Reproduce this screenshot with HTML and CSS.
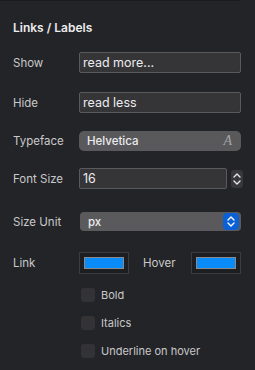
FILE: index.html
```html
<!DOCTYPE html>
<html lang="en">
<head>
    <meta charset="UTF-8">
    <title>Links / Labels</title>
    <link rel="stylesheet" href="styles.css">
</head>
<body>
    <div class="topline"></div>
    <div class="panel">
        <h3>Links / Labels</h3>

        <div class="row row-show">
            <label>Show</label>
            <div class="field">read more...</div>
        </div>

        <div class="row row-hide">
            <label>Hide</label>
            <div class="field">read less</div>
        </div>

        <div class="row row-face">
            <label>Typeface</label>
            <div class="fontbtn">
                <span>Helvetica</span>
                <span class="font-icon">A</span>
            </div>
        </div>

        <div class="row row-size">
            <label>Font Size</label>
            <div class="field field-num">16</div>
            <div class="stepper">
                <svg width="12" height="18" viewBox="0 0 12 18">
                    <path d="M3 7 L6 4 L9 7" fill="none" stroke="#e6e6e6" stroke-width="1.4" stroke-linecap="round" stroke-linejoin="round"/>
                    <path d="M3 11 L6 14 L9 11" fill="none" stroke="#e6e6e6" stroke-width="1.4" stroke-linecap="round" stroke-linejoin="round"/>
                </svg>
            </div>
        </div>

        <div class="row row-unit">
            <label>Size Unit</label>
            <div class="select">
                <span>px</span>
                <span class="select-arrows">
                    <svg width="16" height="17" viewBox="0 0 16 17">
                        <path d="M5 7 L8 4 L11 7" fill="none" stroke="#fff" stroke-width="1.4" stroke-linecap="round" stroke-linejoin="round"/>
                        <path d="M5 10 L8 13 L11 10" fill="none" stroke="#fff" stroke-width="1.4" stroke-linecap="round" stroke-linejoin="round"/>
                    </svg>
                </span>
            </div>
        </div>

        <div class="row row-colors">
            <label>Link</label>
            <div class="well"><div class="swatch"></div></div>
            <span class="hover-label">Hover</span>
            <div class="well"><div class="swatch"></div></div>
        </div>

        <div class="checks">
            <div class="check"><span class="box"></span>Bold</div>
            <div class="check"><span class="box"></span>Italics</div>
            <div class="check"><span class="box"></span>Underline on hover</div>
        </div>
    </div>
</body>
</html>
```

FILE: styles.css
```css
body {
    margin: 0;
    background: #232427;
    font-family: 'Inter', 'Roboto', sans-serif;
    color: #c9c9cb;
    font-size: 11.5px;
}

.topline {
    width: 240px;
    height: 1px;
    background: #1a1b1d;
}

.panel {
    padding: 0 14px 0 13px;
}

h3 {
    margin: 0;
    padding-top: 20px;
    height: 14px;
    line-height: 14px;
    font-size: 12px;
    font-weight: 600;
    color: #ececee;
}

.row {
    display: flex;
    align-items: center;
}

.row label {
    width: 66px;
    flex: none;
}

.row-show { margin-top: 17px; height: 21px; }
.row-hide { margin-top: 19px; height: 21px; }
.row-face { margin-top: 18px; height: 20px; }
.row-size { margin-top: 17px; height: 21px; }
.row-unit { margin-top: 23px; height: 19px; }
.row-colors { margin-top: 21px; height: 22px; }

.field {
    flex: 1;
    height: 19px;
    line-height: 19px;
    padding: 0 3px;
    background: #353538;
    border: 1px solid #5a5a5d;
    border-radius: 2px;
    font-size: 12.5px;
    color: #ececee;
}

.field-num {
    flex: none;
    width: 140px;
}

.stepper {
    margin-left: 4px;
    width: 12px;
    height: 18px;
    background: #38383b;
    border-radius: 3px;
}

.stepper svg, .select-arrows svg {
    display: block;
}

.fontbtn {
    flex: 1;
    height: 20px;
    display: flex;
    align-items: center;
    justify-content: space-between;
    padding: 0 9px 0 8px;
    background: #59595c;
    border-radius: 5px;
    color: #ececee;
    font-weight: 500;
    font-size: 11.5px;
}

.font-icon {
    font-family: 'Liberation Serif', serif;
    font-style: italic;
    font-weight: normal;
    font-size: 14px;
    color: #a4a4a6;
}

.select {
    flex: 1;
    margin-left: 1px;
    height: 19px;
    display: flex;
    align-items: center;
    justify-content: space-between;
    padding: 0 2px 0 8px;
    background: #5a5a5d;
    border-radius: 4px;
    color: #ececee;
    font-weight: 500;
    font-size: 11.5px;
}

.select-arrows {
    width: 16px;
    height: 17px;
    background: #0b60d6;
    border-radius: 4px;
}

.well {
    width: 50px;
    height: 22px;
    padding: 4px;
    box-sizing: border-box;
    background: #1d1e21;
    border: 1px solid #3d3d40;
}

.swatch {
    height: 100%;
    background: #0a8cf8;
    border: 1px solid #8a8a8c;
    box-sizing: border-box;
}

.hover-label {
    margin-left: 14px;
    width: 48px;
}

.checks {
    margin-top: 14px;
    padding-left: 68px;
    display: flex;
    flex-direction: column;
    gap: 14px;
    font-size: 11px;
}

.check {
    display: flex;
    align-items: center;
    height: 14px;
}

.box {
    width: 14px;
    height: 14px;
    margin-right: 6px;
    background: #333336;
    border-radius: 3px;
}
```
